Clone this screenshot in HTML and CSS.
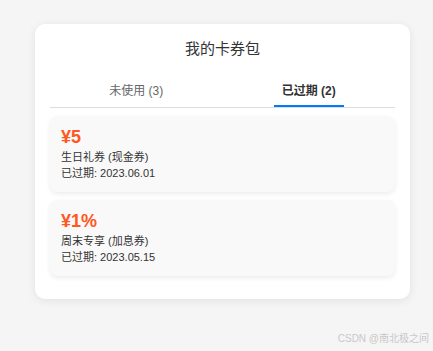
FILE: index.html
```html
<!DOCTYPE html>
<html lang="zh">
<head>
<meta charset="utf-8">
<title>我的卡券包</title>
<link rel="stylesheet" href="styles.css">
</head>
<body>
<div class="wallet">
  <h1 class="title">我的卡券包</h1>
  <div class="tabs">
    <div class="tab"><span class="tab-label">未使用 (3)</span></div>
    <div class="tab active"><span class="tab-label">已过期 (2)</span></div>
  </div>
  <div class="coupons">
    <div class="coupon">
      <div class="amount">¥5</div>
      <div class="line">生日礼券 (现金券)</div>
      <div class="line">已过期: 2023.06.01</div>
    </div>
    <div class="coupon">
      <div class="amount">¥1%</div>
      <div class="line">周末专享 (加息券)</div>
      <div class="line">已过期: 2023.05.15</div>
    </div>
  </div>
</div>
<div class="watermark">CSDN @南北极之间</div>
</body>
</html>
```
FILE: styles.css
```css
* { box-sizing: border-box; }
html, body { height: 100%; }
body {
  margin: 0;
  padding: 24px 0 0 35px;
  background: #f5f5f5;
  font-family: "Liberation Sans", Arial, "Noto Sans CJK SC", sans-serif;
  color: #333;
  position: relative;
}
.wallet {
  width: 375px;
  background: #fff;
  border-radius: 10px;
  padding: 15px 15px 15px;
  box-shadow: 0 2px 10px rgba(0,0,0,0.08);
}
.title {
  margin: 0 0 15px;
  font-size: 15px;
  font-weight: normal;
  line-height: 20px;
  text-align: center;
  color: #333;
}
.tabs {
  display: flex;
  border-bottom: 1px solid #ddd;
}
.tab {
  flex: 1;
  display: flex;
  justify-content: center;
}
.tab-label {
  display: block;
  padding: 9px 8px 5px;
  line-height: 17px;
  font-size: 12px;
  color: #666;
  border-bottom: 2px solid transparent;
}
.tab.active .tab-label {
  color: #333;
  font-weight: bold;
  border-bottom-color: #007bff;
}
.coupons {
  display: flex;
  flex-direction: column;
  gap: 8px;
  padding-top: 8px;
}
.coupon {
  background: #f9f9f9;
  border-radius: 8px;
  padding: 10px 11px 11px;
  box-shadow: 0 2px 5px rgba(0,0,0,0.08);
}
.coupon:last-child { margin-bottom: 8px; }
.amount {
  font-size: 18px;
  font-weight: bold;
  line-height: 22px;
  color: #ff5722;
  margin-bottom: 1px;
}
.line {
  font-size: 11px;
  line-height: 16px;
  color: #333;
}
.watermark {
  position: absolute;
  right: 4px;
  bottom: 6px;
  font-size: 10px;
  color: #c8c8c8;
}
```
